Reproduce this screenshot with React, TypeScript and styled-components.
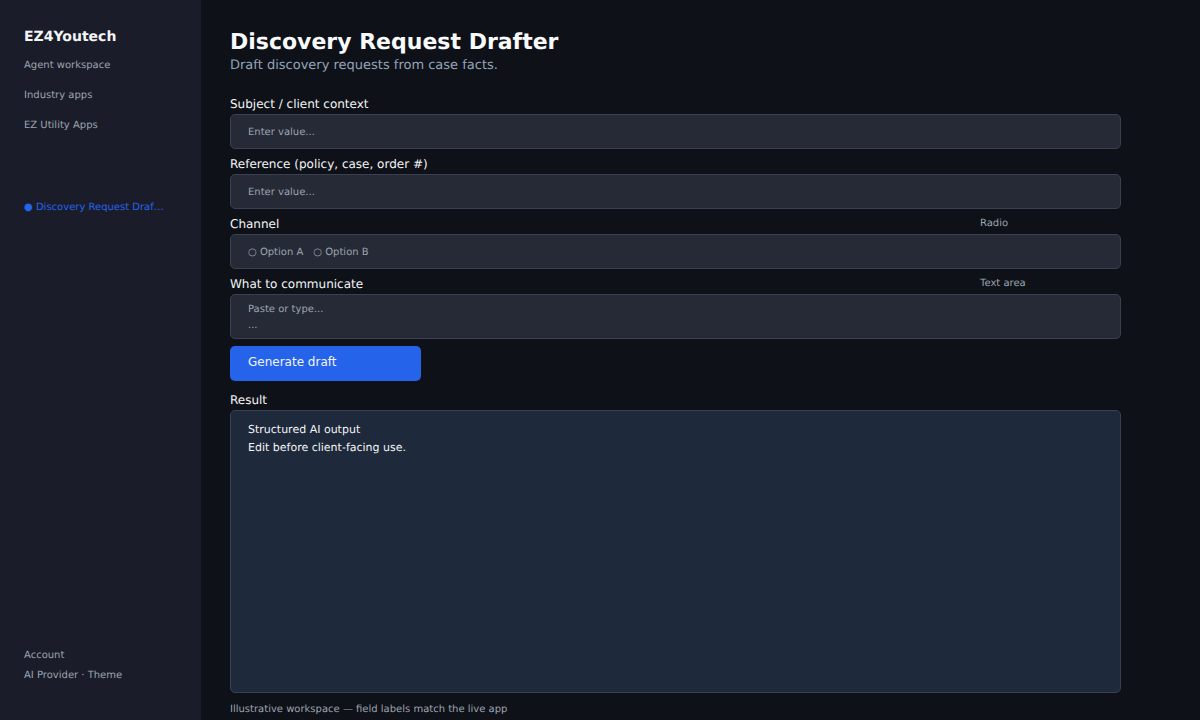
import React from 'react'
import styled, { createGlobalStyle } from 'styled-components'

const GlobalStyle = createGlobalStyle`
  html, body {
    margin: 0;
    height: 100%;
    background: #0e1118;
    font-family: 'DejaVu Sans', sans-serif;
    text-rendering: geometricPrecision;
  }
  * {
    box-sizing: border-box;
  }
`

const fields = [
  { label: 'Subject / client context', lines: ['Enter value...'] },
  { label: 'Reference (policy, case, order #)', lines: ['Enter value...'] },
]

const App: React.FC = () => {
  return (
    <Page>
      <GlobalStyle />
      <Sidebar>
        <Brand>EZ4Youtech</Brand>
        <NavItem>Agent workspace</NavItem>
        <NavItem>Industry apps</NavItem>
        <NavItem>EZ Utility Apps</NavItem>
        <ActiveItem>● Discovery Request Draf…</ActiveItem>
        <SideFooter>
          <FootItem>Account</FootItem>
          <FootItem>AI Provider · Theme</FootItem>
        </SideFooter>
      </Sidebar>
      <Main>
        <Title>Discovery Request Drafter</Title>
        <Subtitle>Draft discovery requests from case facts.</Subtitle>
        <Form>
          {fields.map((f) => (
            <div key={f.label}>
              <LabelRow>
                <Label>{f.label}</Label>
              </LabelRow>
              <Field>{f.lines[0]}</Field>
            </div>
          ))}
          <div>
            <LabelRow>
              <Label>Channel</Label>
              <Hint>Radio</Hint>
            </LabelRow>
            <Field>
              <Radio>○ Option A</Radio>
              <Radio>○ Option B</Radio>
            </Field>
          </div>
          <div>
            <LabelRow>
              <Label>What to communicate</Label>
              <Hint>Text area</Hint>
            </LabelRow>
            <TextArea>
              <div>Paste or type...</div>
              <div>...</div>
            </TextArea>
          </div>
        </Form>
        <Generate>Generate draft</Generate>
        <LabelRow>
          <Label>Result</Label>
        </LabelRow>
        <ResultBox>
          <div>Structured AI output</div>
          <div>Edit before client-facing use.</div>
        </ResultBox>
        <Note>Illustrative workspace — field labels match the live app</Note>
      </Main>
    </Page>
  )
}

const Page = styled.div`
  display: flex;
  width: 1200px;
  height: 720px;
  overflow: hidden;
  background: #0e1118;
`
const Sidebar = styled.aside`
  display: flex;
  flex-direction: column;
  width: 201px;
  padding: 29px 24px 0;
  background: #1a1d29;
`
const Brand = styled.div`
  height: 22px;
  color: #f3f4f6;
  font-size: 14px;
  font-weight: 700;
  line-height: 17px;
`
const NavItem = styled.div`
  height: 30px;
  color: #9ca3af;
  font-size: 10px;
  line-height: 30px;
`
const ActiveItem = styled.div`
  margin-top: 52px;
  color: #2563eb;
  font-size: 10px;
  line-height: 30px;
  white-space: nowrap;
`
const SideFooter = styled.div`
  display: flex;
  flex-direction: column;
  gap: 8px;
  margin-top: auto;
  padding-bottom: 38px;
`
const FootItem = styled.div`
  color: #9ca3af;
  font-size: 10px;
  line-height: 12px;
`
const Main = styled.main`
  flex: 1;
  padding: 29px 79px 0 29px;
`
const Title = styled.h1`
  margin: 0;
  color: #f9fafb;
  font-size: 22px;
  font-weight: 700;
  line-height: 27px;
`
const Subtitle = styled.p`
  margin: 0 0 18px;
  color: #94a3b8;
  font-size: 13px;
  line-height: 20px;
`
const Form = styled.div`
  display: flex;
  flex-direction: column;
  gap: 5px;
`
const LabelRow = styled.div`
  display: grid;
  grid-template-columns: 750px 1fr;
  height: 20px;
`
const Label = styled.span`
  color: #f3f4f6;
  font-size: 12px;
  line-height: 20px;
`
const Hint = styled.span`
  color: #9ca3af;
  font-size: 10px;
  line-height: 20px;
`
const Field = styled.div`
  display: flex;
  align-items: center;
  gap: 10px;
  height: 35px;
  padding: 2px 17px 0;
  border: 1px solid #3a4050;
  border-radius: 5px;
  background: #252a36;
  color: #9ca3af;
  font-size: 10px;
`
const Radio = styled.span`
  color: #9ca3af;
`
const TextArea = styled.div`
  height: 45px;
  padding: 7px 17px 0;
  border: 1px solid #3a4050;
  border-radius: 5px;
  background: #252a36;
  color: #9ca3af;
  font-size: 10px;
  line-height: 16px;
`
const Generate = styled.button`
  display: block;
  width: 191px;
  height: 35px;
  margin: 7px 0 9px;
  padding: 0 18px 3px;
  border: 0;
  border-radius: 5px;
  background: #2563eb;
  color: #f3f4f6;
  font-family: inherit;
  font-size: 12px;
  text-align: left;
`
const ResultBox = styled.div`
  height: 283px;
  padding: 10px 17px;
  border: 1px solid #3a4050;
  border-radius: 5px;
  background: #1e293b;
  color: #f3f4f6;
  font-size: 11px;
  line-height: 18px;
`
const Note = styled.div`
  margin-top: 11px;
  color: #9ca3af;
  font-size: 10px;
  line-height: 12px;
`

export default App
